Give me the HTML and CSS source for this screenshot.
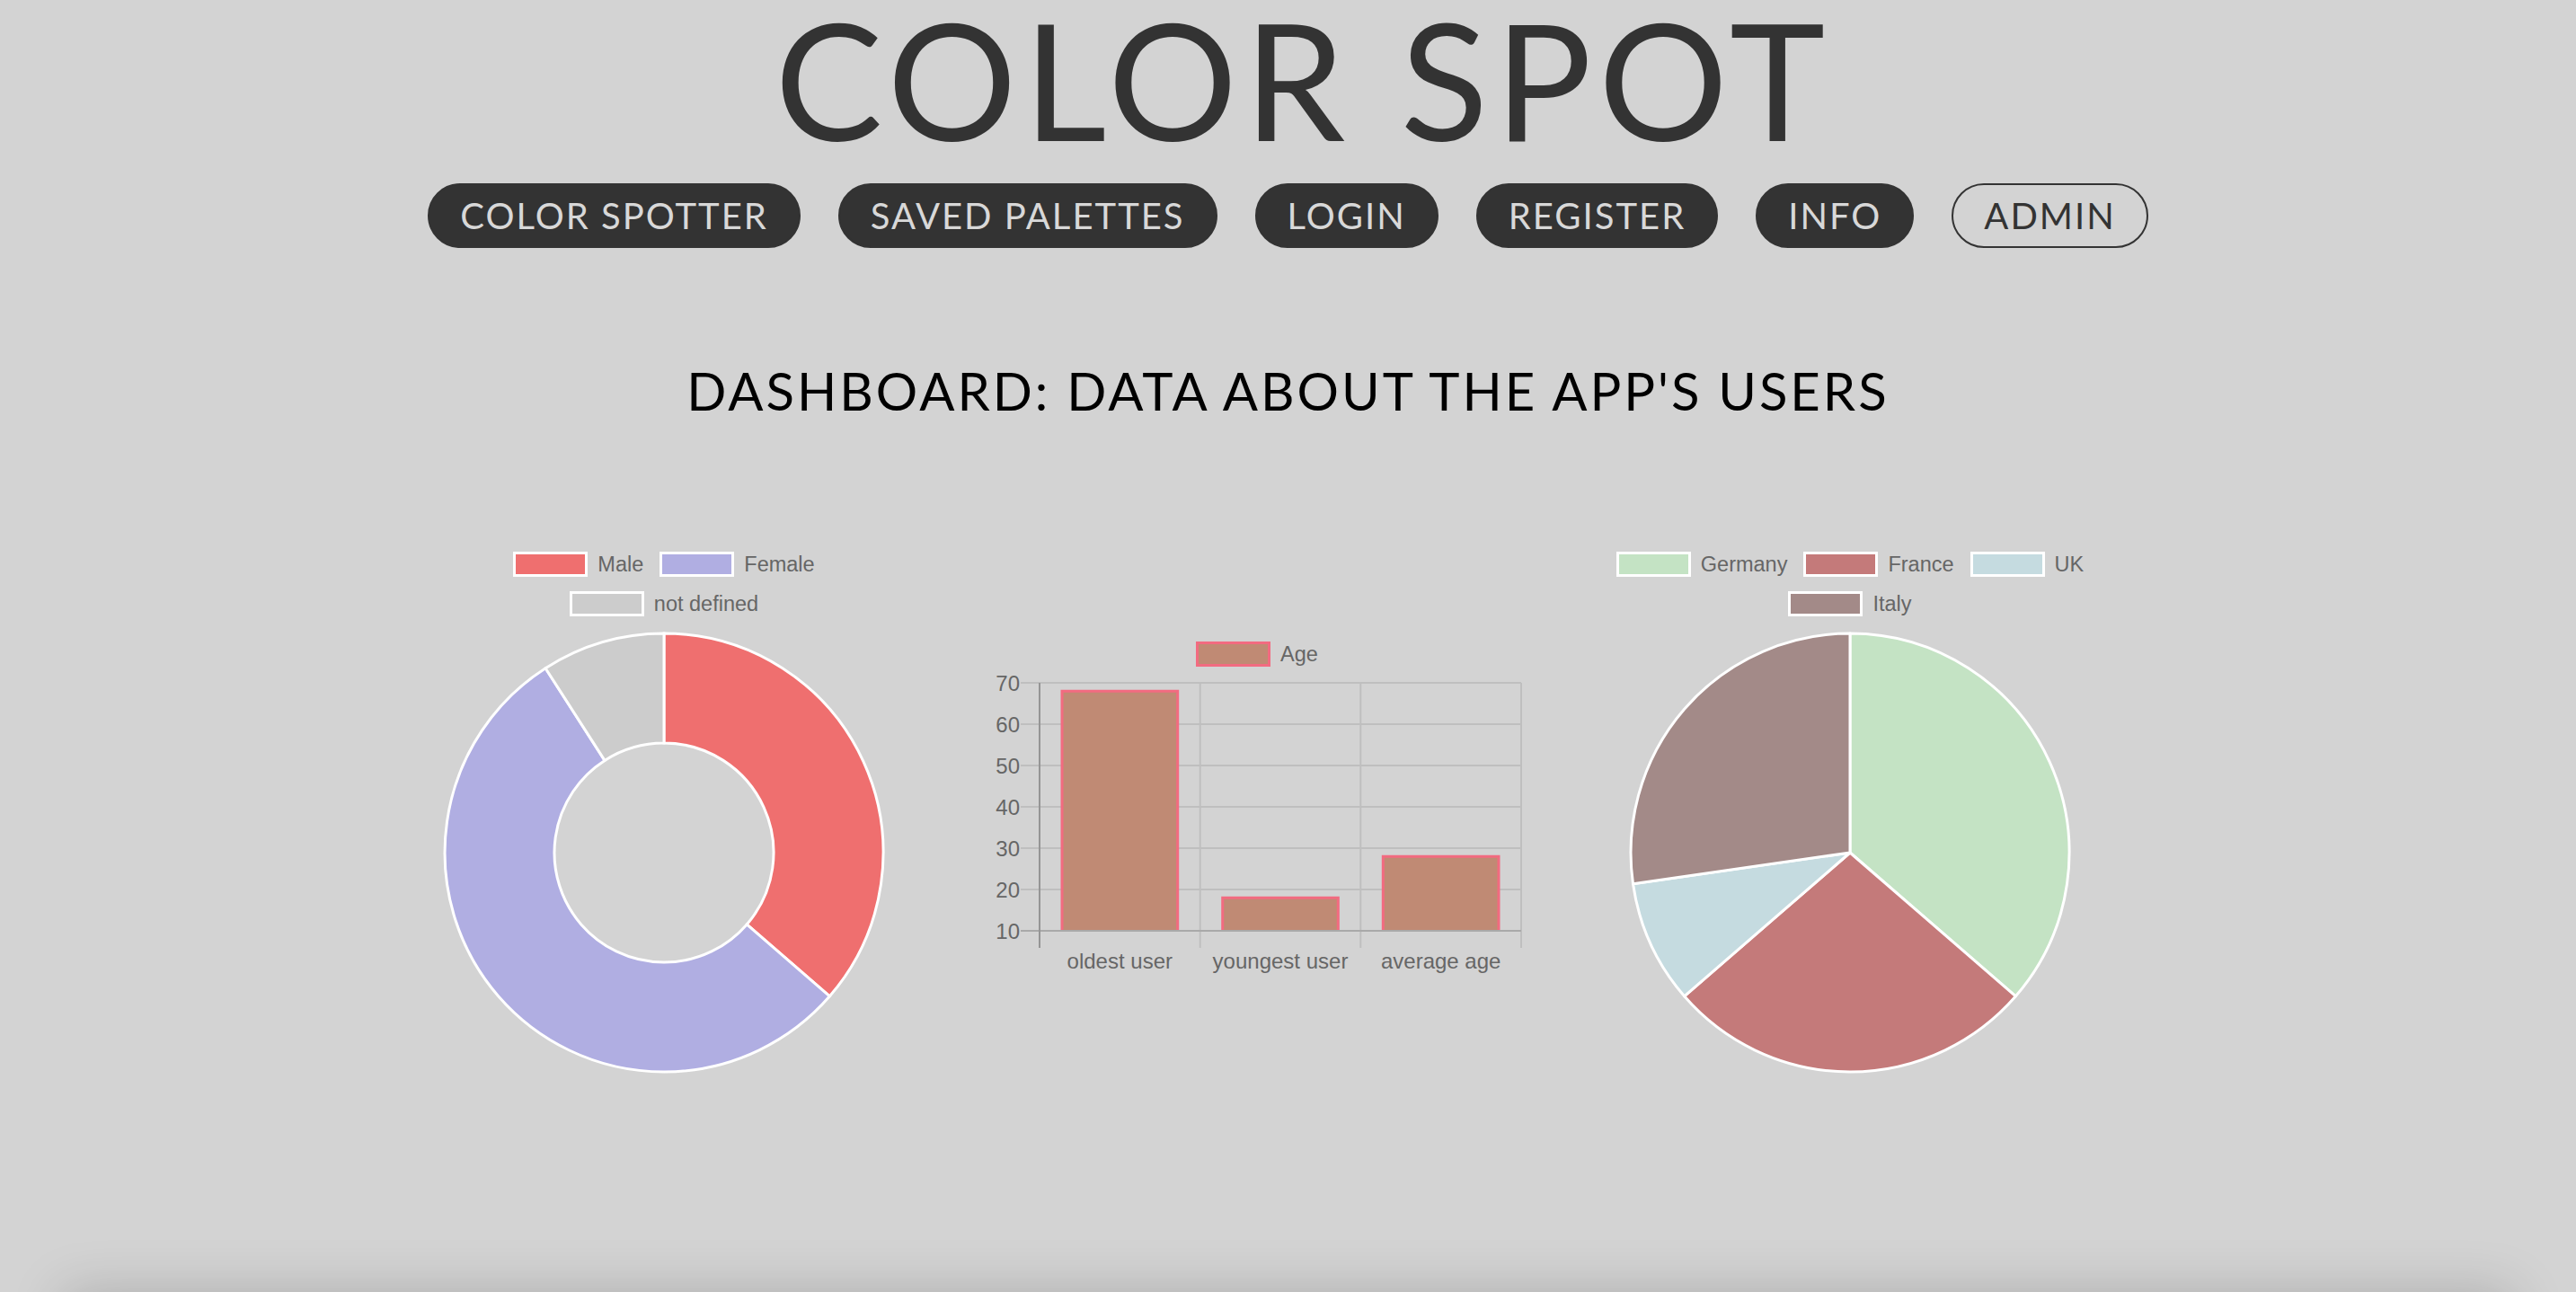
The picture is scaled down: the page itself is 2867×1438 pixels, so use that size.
FILE: index.html
```html
<!DOCTYPE html>
<html lang="en">
<head>
<meta charset="utf-8">
<title>Color Spot – Dashboard</title>
<link rel="stylesheet" href="styles.css">
</head>
<body>
<div class="page">
  <header class="header">
    <h1 class="brand">COLOR SPOT</h1>
    <nav class="nav">
      <a class="nav-btn">COLOR SPOTTER</a>
      <a class="nav-btn">SAVED PALETTES</a>
      <a class="nav-btn">LOGIN</a>
      <a class="nav-btn">REGISTER</a>
      <a class="nav-btn">INFO</a>
      <a class="nav-btn nav-btn-outline">ADMIN</a>
    </nav>
  </header>

  <h2 class="dash-title">DASHBOARD: DATA ABOUT THE APP'S USERS</h2>

  <section class="charts">
    <div class="chart chart-donut">
      <div class="legend">
        <div class="legend-row">
          <span class="legend-item"><span class="swatch sw-male"></span>Male</span>
          <span class="legend-item"><span class="swatch sw-female"></span>Female</span>
        </div>
        <div class="legend-row">
          <span class="legend-item"><span class="swatch sw-undef"></span>not defined</span>
        </div>
      </div>
      <svg class="round-svg" width="660" height="500" viewBox="0 0 660 500">
        <g stroke="#ffffff" stroke-width="3">
          <path fill="#ef6f6f" d="M330,6 A244,244 0 0 1 514.4,409.8 L422.2,329.9 A122,122 0 0 0 330,128 Z"/>
          <path fill="#b0aee2" d="M514.4,409.8 A244,244 0 1 1 198.1,44.7 L264.0,147.4 A122,122 0 1 0 422.2,329.9 Z"/>
          <path fill="#cccccc" d="M198.1,44.7 A244,244 0 0 1 330,6 L330,128 A122,122 0 0 0 264.0,147.4 Z"/>
        </g>
      </svg>
    </div>

    <div class="chart chart-bar">
      <div class="legend">
        <div class="legend-row legend-row-single">
          <span class="legend-item"><span class="swatch sw-age"></span>Age</span>
        </div>
      </div>
      <svg class="bar-svg" width="660" height="355" viewBox="0 0 660 355">
        <g stroke="#bfbfbf" stroke-width="2">
          <line x1="67" y1="18" x2="624" y2="18"/>
          <line x1="67" y1="64" x2="624" y2="64"/>
          <line x1="67" y1="110" x2="624" y2="110"/>
          <line x1="67" y1="156" x2="624" y2="156"/>
          <line x1="67" y1="202" x2="624" y2="202"/>
          <line x1="67" y1="248" x2="624" y2="248"/>
          <line x1="266.7" y1="18" x2="266.7" y2="313"/>
          <line x1="445.3" y1="18" x2="445.3" y2="313"/>
          <line x1="624" y1="18" x2="624" y2="313"/>
        </g>
        <g stroke="#f26b80" stroke-width="3" fill="#c08a74">
          <path d="M113,294 V27.2 H241.7 V294"/>
          <path d="M291.7,294 V257.2 H420.3 V294"/>
          <path d="M470.3,294 V211.2 H599 V294"/>
        </g>
        <line x1="67" y1="294" x2="624" y2="294" stroke="#a9a9a9" stroke-width="2"/>
        <line x1="88" y1="18" x2="88" y2="313" stroke="#959595" stroke-width="2"/>
        <g class="tick" text-anchor="end">
          <text x="66" y="27">70</text>
          <text x="66" y="73">60</text>
          <text x="66" y="119">50</text>
          <text x="66" y="165">40</text>
          <text x="66" y="211">30</text>
          <text x="66" y="257">20</text>
          <text x="66" y="303">10</text>
        </g>
        <g class="tick" text-anchor="middle">
          <text x="177.3" y="336">oldest user</text>
          <text x="356" y="336">youngest user</text>
          <text x="534.7" y="336">average age</text>
        </g>
      </svg>
    </div>

    <div class="chart chart-pie">
      <div class="legend">
        <div class="legend-row">
          <span class="legend-item"><span class="swatch sw-de"></span>Germany</span>
          <span class="legend-item"><span class="swatch sw-fr"></span>France</span>
          <span class="legend-item"><span class="swatch sw-uk"></span>UK</span>
        </div>
        <div class="legend-row">
          <span class="legend-item"><span class="swatch sw-it"></span>Italy</span>
        </div>
      </div>
      <svg class="round-svg" width="660" height="500" viewBox="0 0 660 500">
        <g stroke="#ffffff" stroke-width="3" stroke-linejoin="round">
          <path fill="#c4e3c4" d="M330,250 L330,6 A244,244 0 0 1 514.4,409.8 Z"/>
          <path fill="#c47a7a" d="M330,250 L514.4,409.8 A244,244 0 0 1 145.6,409.8 Z"/>
          <path fill="#c5dbe0" d="M330,250 L145.6,409.8 A244,244 0 0 1 88.5,284.7 Z"/>
          <path fill="#a38a88" d="M330,250 L88.5,284.7 A244,244 0 0 1 330,6 Z"/>
        </g>
      </svg>
    </div>
  </section>
</div>
<footer class="footer"></footer>
</body>
</html>
```

FILE: styles.css
```css
* { box-sizing: border-box; }

html, body {
  margin: 0;
  padding: 0;
  background: #d3d3d3;
}

body {
  font-family: "Lato", "Inter", "DejaVu Sans", sans-serif;
  color: #333333;
  overflow: hidden;
}

.page {
  height: 1438px;
  display: flex;
  flex-direction: column;
  align-items: center;
}

.header {
  display: flex;
  flex-direction: column;
  align-items: center;
}

.brand {
  margin: 0;
  padding-left: 34px;
  font-size: 180px;
  line-height: 174px;
  font-weight: 400;
  color: #333333;
  letter-spacing: 7.5px;
}

.nav {
  margin-top: 30px;
  display: flex;
  gap: 42px;
}

.nav-btn {
  height: 72px;
  padding: 0 34px;
  border-radius: 36px;
  background: #333333;
  color: #d8d8d8;
  font-size: 40px;
  font-weight: 400;
  letter-spacing: 2px;
  display: flex;
  align-items: center;
  justify-content: center;
  border: 2px solid #333333;
}

.nav-btn-outline {
  background: transparent;
  color: #333333;
}

.dash-title {
  margin: 124px 0 0 0;
  font-size: 58px;
  line-height: 70px;
  font-weight: 400;
  color: #000000;
  letter-spacing: 3px;
}

.charts {
  margin-top: 136px;
  display: flex;
  padding-right: 69px;
}

.chart {
  width: 660px;
  display: flex;
  flex-direction: column;
  align-items: center;
}

.chart-bar {
  padding-top: 108px;
}

.legend {
  display: flex;
  flex-direction: column;
  align-items: center;
  font-family: "Liberation Sans", Arial, sans-serif;
  font-size: 23.5px;
  color: #666666;
}

.legend-row {
  height: 44px;
  display: flex;
  align-items: center;
  gap: 18px;
}

.legend-row-single {
  height: 28px;
}

.legend-item {
  display: flex;
  align-items: center;
  gap: 11px;
}

.swatch {
  flex: none;
  width: 83px;
  height: 28px;
  border: 3px solid #ffffff;
}

.sw-male { background: #ef6f6f; }
.sw-female { background: #b0aee2; }
.sw-undef { background: #cccccc; }
.sw-age { background: #c08a74; border-color: #f26b80; }
.sw-de { background: #c4e3c4; }
.sw-fr { background: #c47a7a; }
.sw-uk { background: #c5dbe0; }
.sw-it { background: #a38a88; }

.round-svg {
  margin-top: 5px;
  display: block;
}

.bar-svg {
  display: block;
}

.tick {
  font-family: "Liberation Sans", Arial, sans-serif;
  font-size: 24px;
  fill: #666666;
}

.footer {
  margin: 0 70px;
  height: 100px;
  background: #d3d3d3;
  box-shadow: 0 0 60px rgba(0, 0, 0, 0.18);
}
```
